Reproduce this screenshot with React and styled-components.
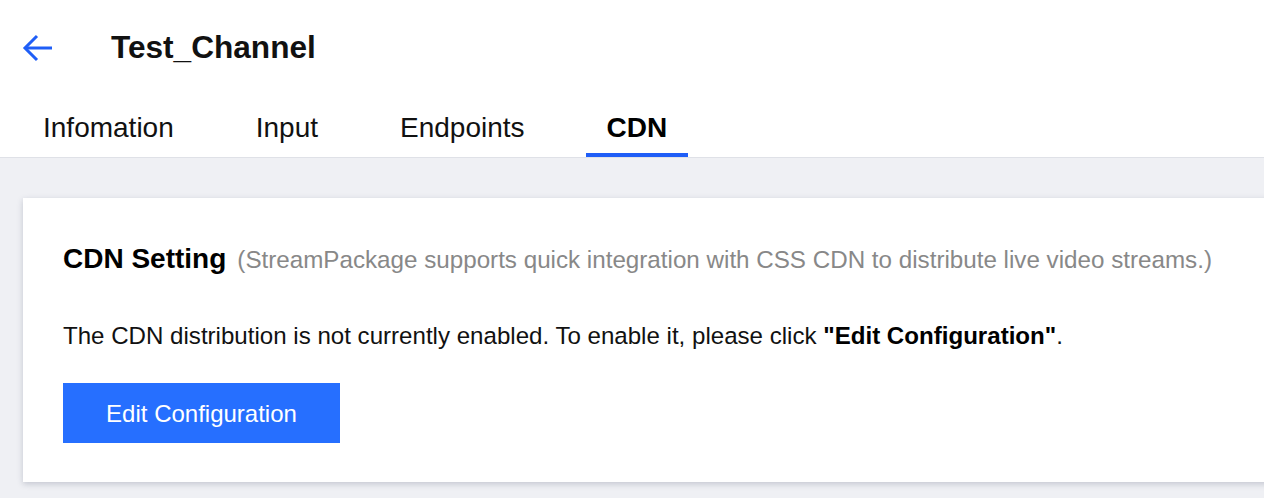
import React from "react";
import styled, { createGlobalStyle } from "styled-components";

const Global = createGlobalStyle`
  html, body { margin: 0; padding: 0; }
  body {
    font-family: "Liberation Sans", Arial, Helvetica, sans-serif;
    background: #eff0f4;
    overflow: hidden;
    color: #000;
  }
`;

const Page = styled.div`
  width: 1264px;
  min-height: 498px;
  background: #eff0f4;
  overflow: hidden;
`;

const Header = styled.header`
  background: #fff;
  border-bottom: 1px solid #dfe1e7;
`;

const TitleRow = styled.div`
  height: 96px;
  display: flex;
  align-items: center;
  padding-left: 22px;
`;

const BackButton = styled.button`
  border: 0;
  background: none;
  padding: 0;
  width: 31px;
  height: 28px;
  display: flex;
  align-items: center;
  justify-content: center;
  color: #1f5ef7;
  cursor: pointer;
`;

const Title = styled.h1`
  margin: 0 0 0 58px;
  font-size: 31.6px;
  font-weight: 700;
  color: #111;
  line-height: 1;
`;

const Tabs = styled.nav`
  display: flex;
  gap: 40px;
  padding-left: 22px;
  height: 61px;
`;

const Tab = styled.div`
  box-sizing: border-box;
  height: 61px;
  padding: 18px 21px 0;
  font-size: 28px;
  line-height: 28px;
  font-weight: ${(p) => (p.$active ? 700 : 400)};
  color: ${(p) => (p.$active ? "#000" : "#111")};
  border-bottom: 4px solid ${(p) => (p.$active ? "#1f5ef7" : "transparent")};
  cursor: pointer;
`;

const Main = styled.main`
  padding: 40px 0 16px 23px;
`;

const Card = styled.section`
  box-sizing: border-box;
  width: 1280px;
  height: 284px;
  background: #fff;
  padding: 41px 40px 40px;
  box-shadow: 0 2px 6px rgba(40, 50, 80, 0.22);
`;

const CardHeading = styled.div`
  display: flex;
  align-items: baseline;
  gap: 11px;
  line-height: 40px;
  white-space: nowrap;
`;

const HeadingTitle = styled.h2`
  margin: 0;
  font-size: 28px;
  font-weight: 700;
  color: #000;
`;

const HeadingHint = styled.span`
  font-size: 24.2px;
  color: #888;
`;

const Message = styled.p`
  margin: 38px 0 0;
  font-size: 24.1px;
  line-height: 36px;
  color: #111;
  white-space: nowrap;

  strong { color: #000; }
`;

const PrimaryButton = styled.button`
  margin-top: 29px;
  height: 60px;
  width: 277px;
  border: 0;
  padding: 2px 0 0;
  background: #266fff;
  color: #fff;
  font-family: inherit;
  font-size: 24px;
  cursor: pointer;
`;

export default function App() {
  const tabs = ["Infomation", "Input", "Endpoints", "CDN"];
  return (
    <Page>
      <Global />
      <Header>
        <TitleRow>
          <BackButton aria-label="Back">
            <svg width="31" height="28" viewBox="0 0 31 28" fill="none">
              <path d="M3 14 H30" stroke="currentColor" strokeWidth="3" />
              <path d="M15 2 L3 14 L15 26" stroke="currentColor" strokeWidth="3" strokeLinejoin="miter" />
            </svg>
          </BackButton>
          <Title>Test_Channel</Title>
        </TitleRow>
        <Tabs>
          {tabs.map((t) => (
            <Tab key={t} $active={t === "CDN"}>{t}</Tab>
          ))}
        </Tabs>
      </Header>
      <Main>
        <Card>
          <CardHeading>
            <HeadingTitle>CDN Setting</HeadingTitle>
            <HeadingHint>(StreamPackage supports quick integration with CSS CDN to distribute live video streams.)</HeadingHint>
          </CardHeading>
          <Message>
            The CDN distribution is not currently enabled. To enable it, please click <strong>"Edit Configuration"</strong>.
          </Message>
          <PrimaryButton>Edit Configuration</PrimaryButton>
        </Card>
      </Main>
    </Page>
  );
}
